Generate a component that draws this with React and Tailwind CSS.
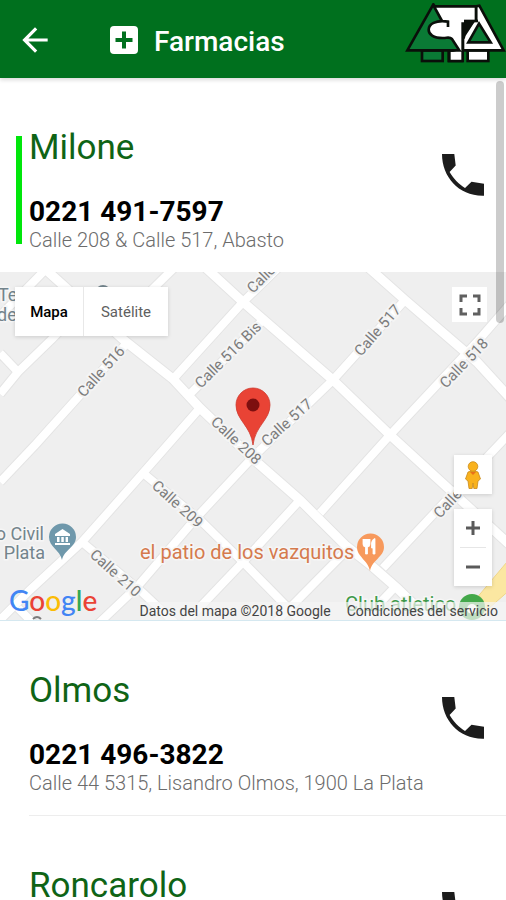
import React from 'react';
import { MdArrowBack } from 'react-icons/md';

const pharmacies = [
  {
    id: 1,
    name: 'Milone',
    phone: '0221 491-7597',
    address: 'Calle 208 & Calle 517, Abasto',
    onDuty: true,
  },
  {
    id: 2,
    name: 'Olmos',
    phone: '0221 496-3822',
    address: 'Calle 44 5315, Lisandro Olmos, 1900 La Plata',
  },
  {
    id: 3,
    name: 'Roncarolo',
    phone: '0221 491-3040',
    address: 'Calle 520 & Calle 208, Abasto',
  },
];

const avenues = [
  'M44 268L125 341L173 379L200 408L252 458L300 500L345 545L373 567L397 588L434 624',
  'M206 268L243 302L333 380L390 435L450 490L510 545',
  'M369 268L405 300L477 362L510 398',
];

const streets = [
  'M47 268L0 316',
  'M174 268L112 329',
  'M80 310L52 339L18 372L0 394',
  'M0 353L18 372',
  'M127 343L80 395L36 444L0 482',
  'M278 268L243 302L175 377',
  'M262 321L190 394',
  'M200 408L143 473L82 542L30 590L-4 624',
  'M405 300L333 380L252 458L197 517L137 587L98 624',
  'M510 304L477 342L390 435L320 513',
  'M143 473L200 520L243 562L302 622',
  'M82 542L143 593L176 624',
  'M300 500L243 562L184 624',
  'M345 552L276 622',
  'M510 433L457 489L383 568',
  'M395 587L362 622',
  'M18 608L34 624',
];

const streetLabels = [
  { id: 1, text: 'Calle 516', x: 84, y: 398, angle: -48 },
  { id: 2, text: 'Calle 516 Bis', x: 201, y: 389, angle: -45 },
  { id: 3, text: 'Calle 517', x: 253, y: 294, angle: -45 },
  { id: 4, text: 'Calle 517', x: 361, y: 357, angle: -49 },
  { id: 5, text: 'Calle 518', x: 446, y: 389, angle: -46 },
  { id: 6, text: 'Calle 517', x: 267, y: 447, angle: -42 },
  { id: 7, text: 'Calle 208', x: 210, y: 423, angle: 43 },
  { id: 8, text: 'Calle 209', x: 151, y: 487, angle: 42 },
  { id: 9, text: 'Calle 210', x: 89, y: 556, angle: 42 },
  { id: 10, text: 'Calle 519', x: 440, y: 519, angle: -47 },
];

function TreesLogo() {
  return (
    <svg viewBox="0 0 330 216" className="h-[72px] w-[110px]" role="img" aria-label="Logo">
      <g stroke="#0a0f0a" strokeWidth="8" strokeLinejoin="miter">
        <rect x="78" y="142" width="62" height="32" fill="#0a7a35" />
        <rect x="158" y="142" width="40" height="32" fill="#fff" />
        <rect x="215" y="142" width="62" height="32" fill="#fff" />
        <path d="M112 4L34 142H190L172 92Z" fill="#0a7a35" />
        <path d="M250 8L323 142H204V58L240 50V10Z" fill="#fff" />
        <path
          d="M116 10H240V52H204V174H160V150L190 142L170 110C160 100 152 106 140 105C112 103 98 94 98 80C98 64 118 50 156 56V70"
          fill="#fff"
          stroke="none"
        />
        <path d="M116 10L138 54L156 56V70L190 142H204V10Z" fill="#fff" stroke="none" />
        <path
          d="M112 10H240V54M114 10L138 54M156 72V56C118 50 98 64 98 80C98 94 112 105 140 105C152 106 160 100 168 108L190 142H160V174H200V58"
          fill="none"
        />
        <path d="M204 54H238L204 106Z" fill="#0a0f0a" stroke="none" />
        <path d="M236 66L209 110V138" stroke="#fff" strokeWidth="8" fill="none" />
        <path d="M204 54H246" fill="none" />
        <path d="M249 62L217 118H284Z" fill="#0a7a35" />
      </g>
    </svg>
  );
}

function CrossIcon() {
  return (
    <svg viewBox="0 0 28 28" className="h-7 w-7" aria-hidden="true">
      <rect x="0" y="0" width="28" height="28" rx="4" fill="#fff" />
      <path d="M14 5.500V22.500M5.500 14H22.500" stroke="#00701e" strokeWidth="4" />
    </svg>
  );
}

function PhoneIcon() {
  return (
    <svg viewBox="0 0 42 42" className="h-[42px] w-[42px]" aria-hidden="true">
      <path
        d="M0 0H12.300L13.700 11.500L7.600 18C11 24 17 30.500 23 34L29.500 27.800L42 29.700V41.700C17 42.500 0 23 0 0Z"
        fill="#1c1c1c"
      />
    </svg>
  );
}

function PegmanIcon() {
  return (
    <svg viewBox="0 0 18 28" className="h-7 w-[18px]" aria-hidden="true">
      <g fill="#f9b21d" stroke="#c98a1a" strokeWidth="0.8">
        <path d="M4 11Q9 8.500 14 11L16.500 18L14 20L13 27.500H9.800L9 22L8.200 27.500H5L4 20L1.500 18Z" />
        <circle cx="9" cy="5.500" r="4.800" />
      </g>
      <path d="M6 11L9 14L12 11Z" fill="#e8711a" />
    </svg>
  );
}

function MapDrawing() {
  return (
    <svg
      viewBox="0 272 506 348"
      preserveAspectRatio="xMidYMid slice"
      className="h-full w-full font-[Roboto,sans-serif]"
      aria-hidden="true">
      <rect x="-500" y="272" width="1500" height="348" fill="#efefef" />
      <path d="M512 556L470 606L480 616L512 588Z" fill="#fbe7a1" stroke="#f0d588" />
      <g fill="none" stroke="#e4e4e4">
        {streets.map((d) => <path key={d} d={d} strokeWidth="10" />)}
        {avenues.map((d) => <path key={d} d={d} strokeWidth="11" />)}
      </g>
      <g fill="none" stroke="#fff">
        {streets.map((d) => <path key={d} d={d} strokeWidth="8" />)}
        {avenues.map((d) => <path key={d} d={d} strokeWidth="9" />)}
      </g>

      <g fontSize="15" fill="#7c7c7c" stroke="#f4f4f4" strokeWidth="4" paintOrder="stroke">
        {streetLabels.map((label) => (
          <text
            key={label.id}
            x={label.x}
            y={label.y}
            transform={`rotate(${label.angle} ${label.x} ${label.y})`}>
            {label.text}
          </text>
        ))}
      </g>

      {/* Places */}
      <g fontSize="18" stroke="#f6f6f6" strokeWidth="3" paintOrder="stroke">
        <g fill="#73848c">
          <text x="-2" y="301">Te</text>
          <text x="-3" y="321">de</text>
          <text x="44" y="540" textAnchor="end">o Civil</text>
          <text x="45" y="559" textAnchor="end">Plata</text>
        </g>
        <text x="140" y="559" fontSize="20" fill="#d57a4d">el patio de los vazquitos</text>
        <text x="345" y="611" fontSize="20" fill="#3f9a4a">Club atletico</text>
      </g>
      <path d="M98 288Q103 284 108 288" fill="none" stroke="#73848c" strokeWidth="2" />
      <path d="M33 619Q37 615 41 619" fill="none" stroke="#7c7c7c" strokeWidth="2" />

      {/* Museum pin */}
      <path d="M62 560C60 550 49 547 49 537A13 13 0 0 1 76 537C76 547 64 550 62 560Z" fill="#6f98ab" />
      <path d="M55 534L62.500 529L70 534V536H55ZM57 537H59.500V542H57ZM61.300 537H63.800V542H61.300ZM65.600 537H68V542H65.600ZM55 543H70V545H55Z" fill="#fff" />

      {/* Restaurant pin */}
      <path d="M370 571C368 560 357 557 357 547A13.500 13.500 0 0 1 384 547C384 557 372 560 370 571Z" fill="#f7995c" />
      <path d="M363 539V544Q363 547 365.500 547V554H367.500V547Q370 547 370 544V539M366.500 539V546M373 554V548H371.500V543Q372 539 375 538.500V554Z" fill="#fff" stroke="#fff" strokeWidth="0.8" />

      <circle cx="472" cy="607" r="13" fill="#43a84a" />
      <circle cx="472" cy="609" r="5" fill="#fff" />

      {/* Selected pharmacy */}
      <path d="M253 445C251 426 236 420 236 405A17 17 0 0 1 270 405C270 420 255 426 253 445Z" fill="#e94335" stroke="#cf3a2e" strokeWidth="0.8" />
      <circle cx="253" cy="405" r="6.500" fill="#7d0f0f" />
    </svg>
  );
}

function PharmacyMap() {
  return (
    <section aria-label="Mapa" className="relative h-[349px] overflow-hidden border-b border-[#d5e8f0]">
      <MapDrawing />

      <div className="absolute top-[15px] left-[15px] flex h-[49px] bg-white shadow-[0_1px_4px_rgba(0,0,0,0.15)]">
        <button type="button" className="w-[69px] border-r border-[#e8e8e8] pt-px text-[15px] font-medium text-black">
          Mapa
        </button>
        <button type="button" className="w-[84px] pt-px text-[15px] text-[#606060]">
          Satélite
        </button>
      </div>

      <button
        type="button"
        aria-label="Pantalla completa"
        className="absolute top-[15px] right-[19px] flex h-[35px] w-[35px] items-center justify-center bg-white">
        <svg viewBox="0 0 22 22" className="h-[22px] w-[22px]" fill="none" stroke="#606060" strokeWidth="3" aria-hidden="true">
          <path d="M2 8V2H8M14 2H20V8M20 14V20H14M8 20H2V14" />
        </svg>
      </button>

      <div className="absolute right-[14px] bottom-[34px] flex w-[38px] flex-col gap-[15px]">
        <button
          type="button"
          aria-label="Street View"
          className="flex h-[39px] items-center justify-center bg-white shadow-[0_1px_4px_rgba(0,0,0,0.15)]">
          <PegmanIcon />
        </button>
        <div className="flex h-[77px] flex-col items-center bg-white shadow-[0_1px_4px_rgba(0,0,0,0.15)]">
          <button type="button" aria-label="Acercar" className="flex w-full flex-1 items-center justify-center">
            <svg viewBox="0 0 14 14" className="h-[14px] w-[14px]" stroke="#5a5a5a" strokeWidth="3" aria-hidden="true">
              <path d="M7 0V14M0 7H14" />
            </svg>
          </button>
          <div className="h-px w-[26px] bg-[#e6e6e6]" />
          <button type="button" aria-label="Alejar" className="flex w-full flex-1 items-center justify-center">
            <svg viewBox="0 0 14 14" className="h-[14px] w-[14px]" stroke="#5a5a5a" strokeWidth="3" aria-hidden="true">
              <path d="M0 7H14" />
            </svg>
          </button>
        </div>
      </div>

      <a
        href="#google"
        className="absolute bottom-0.5 left-[9px] font-[Lato,sans-serif] text-[28px] leading-9 font-medium text-[#4285f4]">
        G<span className="text-[#ea4335]">o</span>
        <span className="text-[#fbbc05]">o</span>g
        <span className="text-[#34a853]">l</span>
        <span className="text-[#ea4335]">e</span>
      </a>

      <div className="absolute right-0 bottom-0 flex h-[18px] items-center gap-4 bg-[#f5f5f5]/70 pr-2 text-[14px] leading-[18px] text-[#444]">
        <span>Datos del mapa ©2018 Google</span>
        <a href="#condiciones">Condiciones del servicio</a>
      </div>
    </section>
  );
}

function PharmacyItem({ pharmacy }) {
  return (
    <article className="flex shrink-0 pl-4">
      <div className="flex pt-[58px] pb-7">
        <div className={pharmacy.onDuty ? 'w-[6px] bg-[#00e60b]' : 'w-[6px]'} />
      </div>
      <div
        className={`ml-[7px] flex flex-1 items-center justify-between pr-[22px] ${
          pharmacy.onDuty ? '' : 'border-b border-[#ededed]'
        }`}>
        <div className="pt-[50px] pb-5">
          <h2 className="text-[35px] leading-10 text-[#0f6416]">{pharmacy.name}</h2>
          <p className="mt-7 text-[28px] leading-8 font-bold text-black">{pharmacy.phone}</p>
          <p className="text-[20px] leading-6 font-light text-[#6c6c6c]">{pharmacy.address}</p>
        </div>
        <a href={`tel:${pharmacy.phone}`} aria-label={`Llamar a ${pharmacy.name}`}>
          <PhoneIcon />
        </a>
      </div>
    </article>
  );
}

function App() {
  return (
    <div className="flex h-screen flex-col overflow-hidden bg-white font-[Roboto,sans-serif]">
      <header className="z-10 flex h-[78px] shrink-0 items-center bg-[#00701e] pl-4 shadow-[0_2px_4px_rgba(0,0,0,0.15)]">
        <button type="button" aria-label="Volver" className="pt-0.5 text-white">
          <MdArrowBack className="h-[38px] w-[38px]" />
        </button>
        <div className="ml-14 flex flex-1 items-center gap-4 pt-0.5">
          <CrossIcon />
          <h1 className="pt-1 text-[28px] leading-8 font-medium text-white">Farmacias</h1>
        </div>
        <TreesLogo />
      </header>

      <main className="relative flex flex-1 flex-col overflow-hidden">
        {pharmacies.map((pharmacy) => (
          <React.Fragment key={pharmacy.id}>
            <PharmacyItem pharmacy={pharmacy} />
            {pharmacy.onDuty && (
              <div className="shrink-0">
                <PharmacyMap />
              </div>
            )}
          </React.Fragment>
        ))}
        {/* Scroll indicator */}
        <div className="absolute top-[3px] right-[2px] h-[242px] w-2 rounded-full bg-black/20" />
      </main>
    </div>
  );
}

export default App;
